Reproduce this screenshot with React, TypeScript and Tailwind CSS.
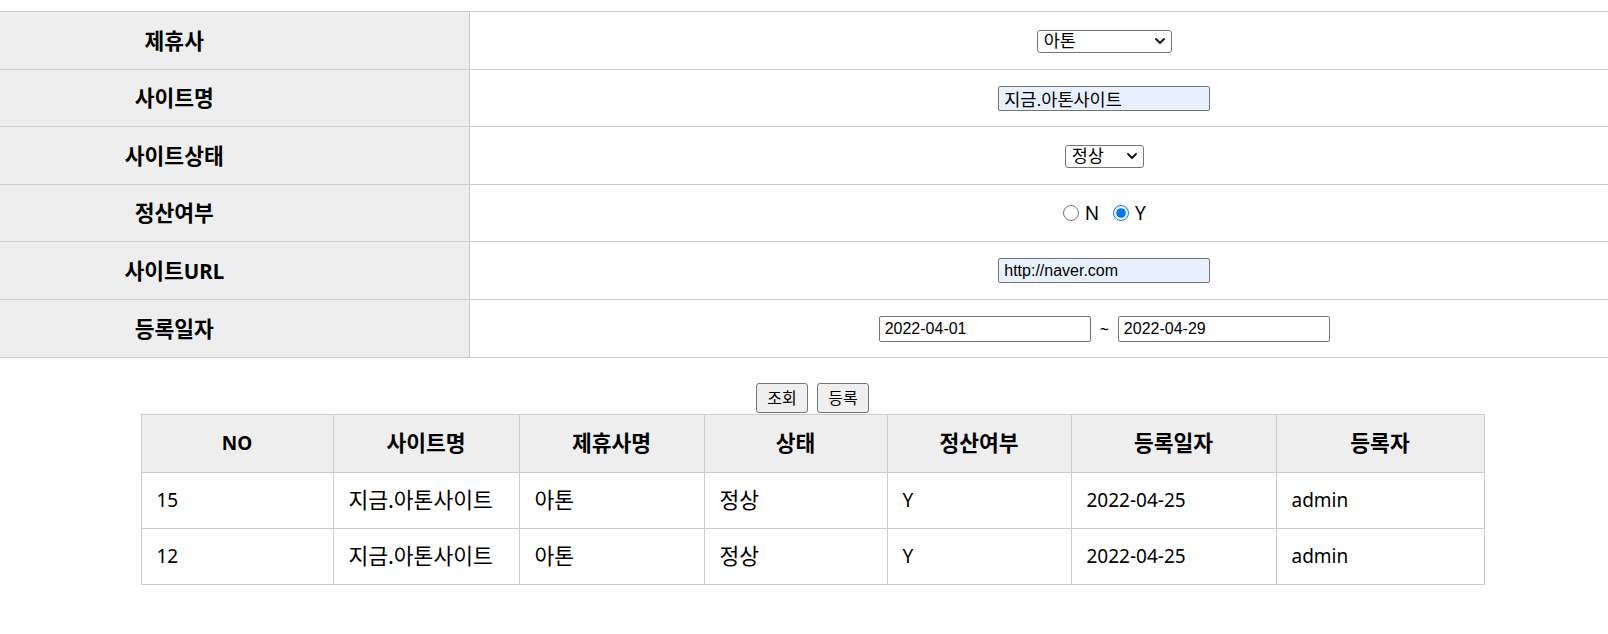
import React from "react";

const KR = '"Noto Sans", "Noto Sans CJK KR", sans-serif';
const INPUT_FONT = '"Liberation Sans", "Noto Sans CJK KR", sans-serif';

const isKorean = (s: string) => /[\uac00-\ud7a3]/.test(s);

function Chevron() {
  return (
    <svg
      width="10"
      height="6"
      viewBox="0 0 10 6"
      className="pointer-events-none absolute right-[7px] top-1/2 -translate-y-1/2"
    >
      <path d="M1 1 L5 5 L9 1" fill="none" stroke="#111" strokeWidth="1.8" strokeLinecap="round" strokeLinejoin="round" />
    </svg>
  );
}

function Select({ value, options, w }: { value: string; options: string[]; w: string }) {
  return (
    <span className="relative inline-block align-middle">
      <select
        defaultValue={value}
        className={`${w} h-[23px] appearance-none rounded-[3px] border border-[#767676] bg-white pl-[6px] text-[17.5px] leading-[21px] text-black outline-none`}
        style={{ fontFamily: INPUT_FONT }}
      >
        {options.map((o) => (
          <option key={o}>{o}</option>
        ))}
      </select>
      <Chevron />
    </span>
  );
}

function TextInput({ value, filled, h = "h-[25px]" }: { value: string; filled?: boolean; h?: string }) {
  return (
    <input
      type="text"
      defaultValue={value}
      className={`w-[212px] ${h} rounded-[2px] border border-[#767676] px-[5px] align-middle ${
        isKorean(value) ? "text-[17.5px]" : "text-[16px]"
      } text-black outline-none ${filled ? "bg-[#e8f0fe]" : "bg-white"}`}
      style={{ fontFamily: INPUT_FONT }}
    />
  );
}

const rows: { label: React.ReactNode; key: string; h: string; content: React.ReactNode }[] = [
  { key: "a", label: "제휴사", h: "h-[58px]", content: <Select value="아톤" options={["아톤", "기타"]} w="w-[135px]" /> },
  { key: "b", label: "사이트명", h: "h-[57px]", content: <TextInput value="지금.아톤사이트" filled /> },
  { key: "c", label: "사이트상태", h: "h-[58px]", content: <Select value="정상" options={["정상", "중지"]} w="w-[79px]" /> },
  {
    key: "d",
    label: "정산여부",
    h: "h-[57px]",
    content: (
      <span className="inline-flex items-center text-[19px]">
        <input type="radio" name="calc" className="m-0 h-[16px] w-[16px]" />
        <span className="ml-[6px]">N</span>
        <input type="radio" name="calc" defaultChecked className="m-0 ml-[14px] h-[16px] w-[16px]" />
        <span className="ml-[6px]">Y</span>
      </span>
    ),
  },
  {
    key: "e",
    label: (
      <>
        사이트<span className="text-[20.5px]">URL</span>
      </>
    ),
    h: "h-[58px]",
    content: <TextInput value="http://naver.com" filled />,
  },
  {
    key: "f",
    label: "등록일자",
    h: "h-[58px]",
    content: (
      <span className="inline-flex items-center">
        <TextInput value="2022-04-01" h="h-[26px]" />
        <span className="mx-[9px] text-[16px]">~</span>
        <TextInput value="2022-04-29" h="h-[26px]" />
      </span>
    ),
  },
];

const cols = [
  { t: "NO", w: "w-[192px]" },
  { t: "사이트명", w: "w-[186px]" },
  { t: "제휴사명", w: "w-[185px]" },
  { t: "상태", w: "w-[183px]" },
  { t: "정산여부", w: "w-[184px]" },
  { t: "등록일자", w: "w-[205px]" },
  { t: "등록자", w: "w-[208px]" },
];

const data = [
  ["15", "지금.아톤사이트", "아톤", "정상", "Y", "2022-04-25", "admin"],
  ["12", "지금.아톤사이트", "아톤", "정상", "Y", "2022-04-25", "admin"],
];

export default function App() {
  return (
    <div className="h-[634px] w-[1608px] overflow-hidden bg-white text-[21.5px] text-black" style={{ fontFamily: KR }}>
      <div className="pt-[11px]">
        <table className="w-full table-fixed border-collapse">
          <colgroup>
            <col className="w-[469px]" />
            <col />
          </colgroup>
          <tbody>
            {rows.map((r) => (
              <tr key={r.key} className={r.h}>
                <th className="border-y border-r border-[#cccccc] bg-[#eeeeee] pr-[120px] text-center align-middle font-bold leading-none">
                  {r.label}
                </th>
                <td className="border-y border-[#cccccc] pl-[131px] text-center align-middle leading-none">{r.content}</td>
              </tr>
            ))}
          </tbody>
        </table>
      </div>

      <div className="ml-[141px] mt-[25px] flex w-[1343px] flex-col items-center">
        <div className="mb-[1px] flex gap-[9px]">
          {["조회", "등록"].map((b) => (
            <button
              key={b}
              type="button"
              className="h-[30px] w-[52px] rounded-[3px] border border-[#767676] bg-[#efefef] text-[16px] text-black"
            >
              {b}
            </button>
          ))}
        </div>
        <table className="w-[1343px] table-fixed border-collapse">
          <colgroup>
            {cols.map((c) => (
              <col key={c.t} className={c.w} />
            ))}
          </colgroup>
          <thead>
            <tr className="h-[58px]">
              {cols.map((c) => (
                <th
                  key={c.t}
                  className={`border border-[#cccccc] bg-[#eeeeee] text-center align-middle font-bold ${
                    isKorean(c.t) ? "text-[21.5px]" : "text-[19px]"
                  }`}
                >
                  {c.t}
                </th>
              ))}
            </tr>
          </thead>
          <tbody>
            {data.map((row, i) => (
              <tr key={i} className="h-[56px]">
                {row.map((v, j) => (
                  <td
                    key={j}
                    className={`border border-[#cccccc] px-[15px] text-left align-middle ${
                      isKorean(v) ? "text-[21.5px]" : "text-[19px]"
                    }`}
                  >
                    {v}
                  </td>
                ))}
              </tr>
            ))}
          </tbody>
        </table>
      </div>
    </div>
  );
}
